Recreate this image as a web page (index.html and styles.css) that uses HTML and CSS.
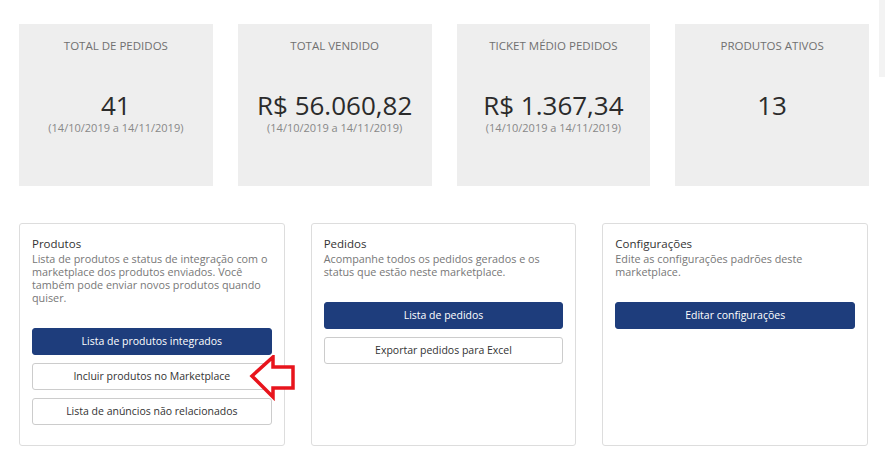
FILE: index.html
```html
<html>
	<head>
		<link rel="stylesheet" href="styles.css">
	</head>
	<body>
		<div class="page">
			<div class="stats">
				<div class="stat">
					<div class="statTitle">TOTAL DE PEDIDOS</div>
					<div class="statValue">41</div>
					<div class="statDate">(14/10/2019 a 14/11/2019)</div>
				</div>
				<div class="stat">
					<div class="statTitle">TOTAL VENDIDO</div>
					<div class="statValue">R$ 56.060,82</div>
					<div class="statDate">(14/10/2019 a 14/11/2019)</div>
				</div>
				<div class="stat">
					<div class="statTitle">TICKET MÉDIO PEDIDOS</div>
					<div class="statValue">R$ 1.367,34</div>
					<div class="statDate">(14/10/2019 a 14/11/2019)</div>
				</div>
				<div class="stat">
					<div class="statTitle">PRODUTOS ATIVOS</div>
					<div class="statValue">13</div>
				</div>
			</div>
			<div class="cards">
				<div class="card">
					<div class="cardTitle">Produtos</div>
					<div class="cardText">Lista de produtos e status de integração com o marketplace dos produtos enviados. Você também pode enviar novos produtos quando quiser.</div>
					<div class="btn primary">Lista de produtos integrados</div>
					<div class="btn outline hint">Incluir produtos no Marketplace
						<svg class="arrow" width="48" height="46" viewBox="0 0 48 46">
							<path d="M3 21 L24 2 L24 12 L44 12 L44 33 L24 33 L24 42 Z" fill="#fff" stroke="#e8141c" stroke-width="3.5" stroke-linejoin="miter"/>
						</svg>
					</div>
					<div class="btn outline">Lista de anúncios não relacionados</div>
				</div>
				<div class="card">
					<div class="cardTitle">Pedidos</div>
					<div class="cardText">Acompanhe todos os pedidos gerados e os status que estão neste marketplace.</div>
					<div class="btn primary">Lista de pedidos</div>
					<div class="btn outline">Exportar pedidos para Excel</div>
				</div>
				<div class="card">
					<div class="cardTitle">Configurações</div>
					<div class="cardText">Edite as configurações padrões deste marketplace.</div>
					<div class="btn primary">Editar configurações</div>
				</div>
			</div>
		</div>
		<div class="scrollbar"></div>
	</body>
</html>
```

FILE: styles.css
```css
body {
	margin: 0;
	font-family: "Open Sans", "DejaVu Sans", sans-serif;
	background: #fff;
}
.page {
	width: 850px;
	padding: 24px 0 0 19px;
}
.stats {
	display: grid;
	grid-template-columns: repeat(4, 1fr);
	gap: 25px;
}
.stat {
	height: 162px;
	box-sizing: border-box;
	padding-top: 14px;
	background-color: #eeeeee;
	text-align: center;
}
.statTitle {
	font-size: 11.5px;
	line-height: 16px;
	color: #707070;
}
.statValue {
	margin-top: 38px;
	font-size: 26px;
	line-height: 26px;
	color: #2b2b2b;
}
.statDate {
	margin-top: 4px;
	font-size: 11px;
	line-height: 12px;
	color: #888;
}
.cards {
	display: grid;
	grid-template-columns: repeat(3, 1fr);
	gap: 26px;
	margin-top: 37px;
	width: 849px;
}
.card {
	height: 223px;
	box-sizing: border-box;
	border: 1px solid #dddddd;
	border-radius: 3px;
	padding: 11px 12px 0 12px;
}
.cardTitle {
	font-size: 11.5px;
	line-height: 17px;
	color: #333;
}
.cardText {
	font-size: 10.8px;
	line-height: 13px;
	color: #777;
	margin-bottom: 24px;
}
.btn {
	height: 27px;
	box-sizing: border-box;
	border-radius: 3px;
	font-size: 10.5px;
	line-height: 25px;
	text-align: center;
	margin-bottom: 8px;
}
.primary {
	background-color: #1e3d7c;
	border: 1px solid #1e3d7c;
	color: #fff;
}
.outline {
	background-color: #fff;
	border: 1px solid #cccccc;
	color: #333;
}
.hint {
	position: relative;
}
.arrow {
	position: absolute;
	left: 216px;
	top: -9px;
}
.scrollbar {
	position: absolute;
	right: 0;
	top: 0;
	width: 6px;
	height: 77px;
	background-color: #f3f3f3;
}
```
